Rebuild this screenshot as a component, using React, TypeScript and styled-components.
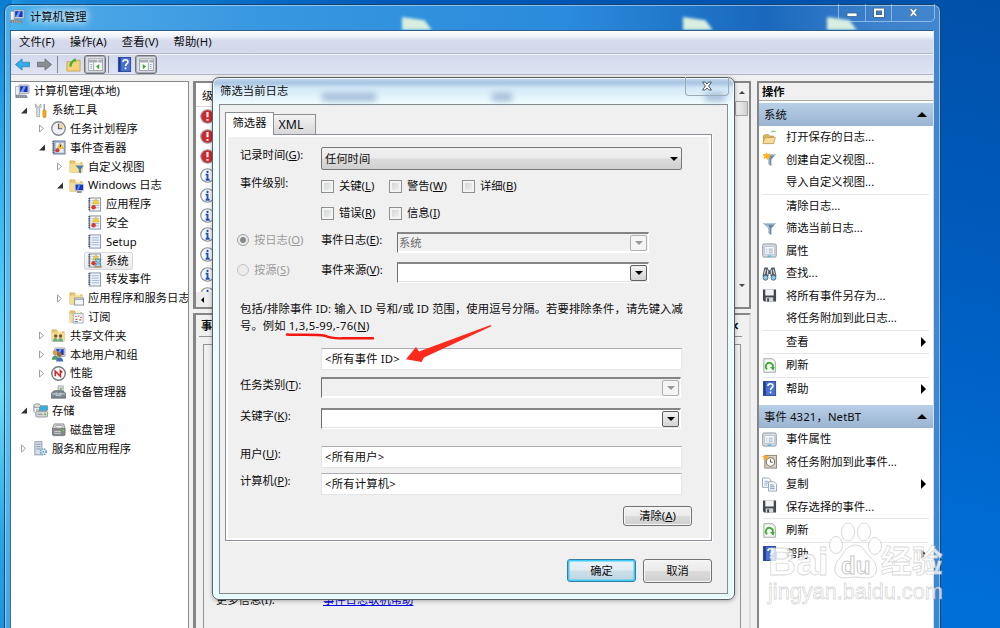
import { ReactNode } from "react";
import styled, { createGlobalStyle, css } from "styled-components";

const GlobalStyle = createGlobalStyle`
  * {
    box-sizing: border-box;
  }
  body {
    margin: 0;
    overflow: hidden;
    font-family: "Noto Sans", "Noto Sans CJK SC", sans-serif;
    font-size: 11.3px;
    line-height: 16px;
    color: #0c0c0c;
  }
  u {
    text-underline-offset: 1px;
  }
`;

/* ---------- icons ---------- */

const book = (
  <>
    <rect x="2.5" y="1" width="12" height="14" fill="#eef3fa" stroke="#7f8ea8" />
    <path d="M5 4h8M5 6.5h8M5 9h8M5 11.5h8" stroke="#9db4d4" />
    <path d="M2.5 1v14" stroke="#4e5a70" strokeWidth="2" strokeDasharray="1.4 .9" />
  </>
);
const alerts = (
  <>
    <path d="M9.500 1.500l3.400 6H6z" fill="#f8cf29" stroke="#e0ac16" strokeWidth=".5" />
    <circle cx="7" cy="11" r="2.400" fill="#d83a2e" />
  </>
);
const folder = (
  <>
    <path d="M1 2h5l1.5 2H14v10H1z" fill="#e9c56c" stroke="#c8a24c" strokeWidth=".7" />
    <path d="M7 1.500h5V5H7z" fill="#fbf6df" />
    <path d="M1 5h13v9H1z" fill="#f4dc92" />
  </>
);
const monitor = (
  <>
    <rect x="4" y="1" width="11" height="9" rx="1" fill="#d5d9df" stroke="#808894" strokeWidth=".7" />
    <rect x="5.500" y="2.300" width="8" height="6.200" fill="#1733c4" />
    <path d="M9 2.300h2.500L9 8.500H6z" fill="#6f9cf0" />
  </>
);
const funnel = (
  <>
    <path d="M1 2h14l-5 6v7l-3-2V8z" fill="#6b8ba5" />
    <path d="M1 2h14l-1 1.600H2.300z" fill="#b5c9d8" />
    <path d="M7.200 8l-3-3.500h2.500L8 8v5.500l-.8-.6z" fill="#b8d0de" />
  </>
);
const floppy = (
  <>
    <path d="M1 1.500h14v13H2.500L1 13z" fill="#44474d" />
    <rect x="3.500" y="1.500" width="9" height="6.500" fill="#f1f3f5" />
    <rect x="4" y="10" width="8" height="4.500" fill="#d3d6da" />
    <rect x="5.500" y="11" width="2" height="3.500" fill="#44474d" />
  </>
);
const properties = (
  <>
    <rect x=".7" y="1" width="14.500" height="14" rx="1.500" fill="#d9dee3" stroke="#8e979f" />
    <rect x="3" y="4" width="10" height="8.500" fill="#fff" stroke="#a6b2bd" strokeWidth=".7" />
    <path d="M4.500 6.500h1.300M4.500 8.500h1.300M4.500 10.500h1.300M7 6.500h4.500M7 8.500h4.500M7 10.500h4.500" stroke="#8fa6bd" />
    <path d="M6 14h4" stroke="#3bb5e6" strokeWidth="1.400" />
  </>
);
const help = (
  <>
    <rect x="1.500" y=".5" width="13" height="15" fill="#4a70d2" stroke="#2c4a9b" />
    <path d="M3 1v14" stroke="#1f3a8d" strokeWidth="2" />
    <path d="M6.300 5.400c.2-3.400 5.600-3 5.400 0-.1 1.900-2.500 2-2.600 4.300M9.100 11.300v1.800" fill="none" stroke="#fff" strokeWidth="1.700" />
  </>
);
const disks = (
  <>
    <rect x="1.500" y="6" width="13.500" height="8.500" rx="1.500" fill="#85898b" stroke="#555b5e" strokeWidth=".7" />
    <path d="M1.500 7l2-5h10L15 7z" fill="#d2d5d6" stroke="#666" strokeWidth=".7" />
    <ellipse cx="8.500" cy="5" rx="4" ry="1.600" fill="#eee" stroke="#777" strokeWidth=".6" />
    <path d="M3.500 10h7M3.500 12h7" stroke="#e8e8e8" strokeWidth=".8" />
    <circle cx="13" cy="9" r="1" fill="#66d22c" />
  </>
);

const drawings: Record<string, ReactNode> = {
  computer: (
    <>
      {monitor}
      <path d="M.5 2.500h4V13h-4z" fill="#eef0f2" stroke="#8b929b" strokeWidth=".7" />
      <path d="M1 11.500h11l1.500 3.500H.5z" fill="#777f87" />
      <path d="M2 12.700h10M2 14h10" stroke="#cdd2d6" strokeWidth=".7" strokeDasharray="1.500 .8" />
    </>
  ),
  tools: (
    <>
      <path d="M2.500 1v3.500L4 6v8.500h3V6l1.500-1.500V1L6.800 2.500v2H4.200v-2z" fill="#dde1e4" stroke="#8b9196" strokeWidth=".7" />
      <path d="M12 1v7" stroke="#9aa1a7" strokeWidth="1.600" />
      <rect x="10.500" y="7.500" width="3.400" height="8" rx="1.200" fill="#f0a81e" stroke="#bb7a0e" strokeWidth=".5" />
    </>
  ),
  clock: (
    <>
      <circle cx="8" cy="8" r="7.200" fill="#eef1f5" stroke="#85898e" strokeWidth="1.400" />
      <path d="M8 8V2.500A5.500 5.500 0 0 1 13.500 8z" fill="#f3d694" />
      <path d="M8 3v5.300h4" fill="none" stroke="#53606e" strokeWidth="1.200" />
    </>
  ),
  viewer: (
    <>
      <rect x="2.500" y="1" width="12.500" height="14" fill="#9fb0cb" stroke="#7384a3" />
      <rect x="5" y="3" width="8.500" height="10.500" fill="#e7edf6" />
      <path d="M10 3l3.500 6h-7z" fill="#f8cf29" stroke="#c99a16" strokeWidth=".5" />
      <path d="M10 5v2.500" stroke="#222" />
      <circle cx="6.800" cy="11" r="2.300" fill="#d83a2e" />
      <path d="M2.500 1v14" stroke="#56668a" strokeWidth="2" strokeDasharray="1.400 .9" />
    </>
  ),
  folderFilter: (
    <>
      {folder}
      <path d="M7 7h9l-3.300 4v4.500L10.500 14v-3z" fill="#4f7ea5" />
    </>
  ),
  folderMonitor: (
    <>
      {folder}
      <rect x="6.500" y="6.500" width="9" height="7" fill="#1a35c0" stroke="#c9d1de" />
      <path d="M10 7h2.500l-2.500 6H8z" fill="#5b86e8" />
      <path d="M8.500 15h5" stroke="#68707c" strokeWidth="1.400" />
    </>
  ),
  folderWindow: (
    <>
      {folder}
      <rect x="6" y="7.500" width="9.500" height="7.500" fill="#f4f7fa" stroke="#8b939c" />
      <path d="M6.500 9h8.500" stroke="#9fb3c8" strokeWidth="1.400" />
    </>
  ),
  log: (
    <>
      {book}
      {alerts}
    </>
  ),
  logBusy: (
    <>
      {book}
      {alerts}
      <path d="M8.500 6.500h6.500L12.700 10.500l2.500 4H8.500l2.400-4z" fill="#9bd3ec" stroke="#4b8eab" />
      <path d="M8 15h7.500" stroke="#d99a56" strokeWidth="1.300" />
    </>
  ),
  page: book,
  subscriptions: (
    <>
      {folder}
      <rect x="4.500" y="5" width="10.500" height="10" fill="#f6f8fb" stroke="#9faebf" />
      <path d="M6.500 8h1.500M9.500 7.500h1.500M12 9h1.500M7 11h2M11 11.500h2" stroke="#d2544a" strokeWidth="1.300" />
      <path d="M6 13.500h3.500" stroke="#4b86c4" strokeWidth="1.200" />
    </>
  ),
  shared: (
    <>
      {folder}
      <circle cx="5" cy="8.500" r="1.800" fill="#6d5a32" />
      <circle cx="10.200" cy="8.500" r="1.800" fill="#6d5a32" />
      <path d="M2 14.500c0-5 5-5 5.400 0zM7.500 14.500c0-5 5-5 5.400 0z" fill="#5fae8d" />
    </>
  ),
  users: (
    <>
      {monitor}
      <circle cx="4.500" cy="6" r="2.700" fill="#caa05c" />
      <circle cx="9" cy="8" r="2.600" fill="#9c6c3a" />
      <path d="M.8 13.500C1 8 7.500 8 8 13.500z" fill="#4d9c63" />
      <path d="M5.500 15.500c.2-6 7.200-6 7.500 0z" fill="#4170b8" />
    </>
  ),
  performance: (
    <>
      <circle cx="8" cy="8" r="7.200" fill="#fff" stroke="#777d82" strokeWidth="1.500" />
      <path d="M4.500 11V5.500l5.500 5.500V5l2 2" fill="none" stroke="#d22a2a" strokeWidth="1.700" />
    </>
  ),
  devices: (
    <>
      <rect x="7.500" y="1" width="5.500" height="7" fill="#d7dbde" stroke="#8a9299" strokeWidth=".7" />
      <circle cx="10.500" cy="4" r="1.100" fill="#67b63b" />
      <path d="M.5 8.500L3.500 6H12l3.500 2.500V14H.5z" fill="#7b8891" stroke="#4e5a62" strokeWidth=".7" />
      <path d="M1 9.500h14M5.500 8v3h5V8" fill="none" stroke="#cfd6db" />
    </>
  ),
  storage: (
    <>
      <rect x="3" y="9" width="12.500" height="6" rx="1.200" fill="#d4d8da" stroke="#7f868a" strokeWidth=".8" />
      <rect x="7" y="3" width="8.500" height="5" fill="#2fb0dd" stroke="#5d8390" strokeWidth=".7" />
      <ellipse cx="4.500" cy="3" rx="3.600" ry="2.200" fill="#dadddf" stroke="#7c8286" strokeWidth=".8" />
      <path d="M1 3v6l2 2M3 7.500h4" fill="none" stroke="#7c8286" />
      <circle cx="13" cy="12" r="1" fill="#52c31e" />
      <path d="M5 12h5" stroke="#888" />
    </>
  ),
  disks,
  services: (
    <>
      <rect x="2" y=".8" width="7.500" height="14" fill="#d5dfe8" stroke="#76879a" strokeWidth=".8" />
      <path d="M3.500 3.500H8M3.500 6H8M3.500 8.500H8" stroke="#7f94ac" />
      <circle cx="11" cy="11.500" r="3" fill="#eaf3fa" stroke="#6a9cc2" strokeWidth="1.700" strokeDasharray="1.600 .8" />
      <circle cx="11" cy="11.500" r="1" fill="#6a9cc2" />
    </>
  ),
  back: <path d="M.5 8l7-6v3.600h8v4.800h-8V14z" fill="#31aee8" stroke="#2e7fae" strokeWidth=".8" />,
  forward: <path d="M15.500 8l-7-6v3.600h-8v4.800h8V14z" fill="#8b8f93" stroke="#62666a" strokeWidth=".8" />,
  up: (
    <>
      <path d="M1 5h5l1.500-1.500H15V15H1z" fill="#f3d37c" stroke="#c3983c" strokeWidth=".8" />
      <path d="M3.500 10c0-4 2-5.500 4-6H6l4-3 1.200 4.500-1.500-1C7.500 5.500 6 7 6 10.500z" fill="#46b02d" />
    </>
  ),
  paneLeft: (
    <>
      <rect x=".7" y="2" width="14.600" height="12.500" fill="#fafbfc" stroke="#9a9fa5" />
      <path d="M1 4.500h14" stroke="#a7adb4" strokeWidth="2.500" strokeDasharray="9 1" />
      <path d="M6 6v8" stroke="#9ba2aa" />
      <path d="M2.500 8h2M2.500 10h2M2.500 12h2" stroke="#8ba2bb" />
      <path d="M12 7.500v5.500L8.500 10.200z" fill="#3ba934" />
    </>
  ),
  paneRight: (
    <>
      <rect x=".7" y="2" width="14.600" height="12.500" fill="#fafbfc" stroke="#9a9fa5" />
      <path d="M1 4.500h14" stroke="#a7adb4" strokeWidth="2.500" strokeDasharray="9 1" />
      <path d="M10 6v8" stroke="#9ba2aa" />
      <path d="M11.500 8h2M11.500 10h2M11.500 12h2" stroke="#8ba2bb" />
      <path d="M4 7.500v5.500l3.500-2.800z" fill="#3ba934" />
    </>
  ),
  help,
  open: (
    <>
      <path d="M1.500 6L3 5h4l1 1.500h4.500V14h-11z" fill="#dcb75f" stroke="#ae8839" strokeWidth=".7" />
      <path d="M.8 14.500l2.500-6.500h11L12.500 14.500z" fill="#f4dc96" stroke="#bb964a" strokeWidth=".7" />
      <path d="M10 2.500c1.500-2 3-1.500 4.500-.5" fill="none" stroke="#74cf69" strokeWidth="1.200" />
    </>
  ),
  funnel,
  newFilter: (
    <>
      {funnel}
      <path d="M5 0l1 2.300 2.700-.8-.9 2.700L9.500 6l-2.800.2L5.500 8.800 4.200 6.500l-3 .6 1.300-2.600L.8 2l2.900.4z" fill="#ffb323" />
    </>
  ),
  properties,
  find: (
    <>
      <path d="M2.500 1.500h3.500l1.300 3h1.400l1.300-3h3.500l2 9.500H9V8.500H7V11H.5z" fill="#555b62" />
      <path d="M4 3.500L2.500 9M12 3.500l1.500 5.500M6 4v5M10 4v5" stroke="#d7dce0" strokeWidth="1.200" />
      <circle cx="3.800" cy="12.500" r="2.600" fill="#8bcdec" stroke="#4a6675" />
      <circle cx="12.200" cy="12.500" r="2.600" fill="#8bcdec" stroke="#4a6675" />
    </>
  ),
  floppy,
  refresh: (
    <>
      <path d="M2 .8h9.500L14.200 4v11.200H2z" fill="#f8faf8" stroke="#9aa29a" />
      <path d="M5.500 12A3.800 3.800 0 1 1 11.500 10" fill="none" stroke="#3fae38" strokeWidth="1.900" />
      <path d="M8.500 9.500h5l-1.500 4z" fill="#3fae38" />
    </>
  ),
  task: (
    <>
      <rect x="3" y="1.500" width="12.500" height="13.500" fill="#d8d2c9" stroke="#8e8478" />
      <circle cx="9" cy="8.500" r="4.500" fill="#fff" stroke="#807668" strokeWidth="1.200" />
      <path d="M9 5.700v3h2.500" fill="none" stroke="#554e45" />
      <path d="M3.500 0l1 2.300L7 2 5.300 4l1 2.200-2.600-1L1.500 7 2 4.300 0 2.500l2.600-.2z" fill="#ffa61f" />
    </>
  ),
  copy: (
    <>
      <path d="M.5 1h6.500l2 2v8H.5z" fill="#fff" stroke="#8598b0" strokeWidth=".9" />
      <path d="M2.500 4.500h4M2.500 6.500h4M2.500 8.500h3" stroke="#7ea3d4" />
      <path d="M7 5h5.500l3 2.500V15H7z" fill="#fff" stroke="#8598b0" strokeWidth=".9" />
      <path d="M8.500 8.500h4M8.500 10.500h5M8.500 12.500h5" stroke="#5e8ccc" />
    </>
  ),
  error: (
    <>
      <circle cx="8" cy="8" r="7.200" fill="#cc2a30" stroke="#9da2a8" strokeWidth="1.200" />
      <path d="M8 3.200v5.600M8 10.600v2" stroke="#fff" strokeWidth="2.200" />
    </>
  ),
  info: (
    <>
      <circle cx="8" cy="8" r="7.200" fill="#f7f8fa" stroke="#8e9297" strokeWidth="1.300" />
      <path d="M8 3v2.300M6 7h2v5.500M6 12.500h4.300" fill="none" stroke="#1f4fb8" strokeWidth="2" />
    </>
  ),
};

const Glyph = styled.svg<{ $size?: number }>`
  display: block;
  flex: none;
  width: ${({ $size = 15 }) => $size}px;
  height: ${({ $size = 15 }) => $size}px;
`;

const Icon = ({ name, size }: { name: string; size?: number }) => (
  <Glyph viewBox="0 0 16 16" $size={size}>
    {drawings[name]}
  </Glyph>
);

const Triangle = styled.span<{ $dir: "up" | "down" | "left" | "right"; $color?: string; $size?: number }>`
  flex: none;
  border: ${({ $size = 4 }) => $size}px solid transparent;
  ${({ $dir, $color = "#000", $size = 4 }) => {
    const side = { up: "bottom", down: "top", left: "right", right: "left" }[$dir];
    const opposite = { up: "top", down: "bottom", left: "left", right: "right" }[$dir];
    return css`
      border-${side}: ${$size}px solid ${$color};
      border-${opposite}: 0;
    `;
  }}
`;

/* ---------- desktop and main window ---------- */

const Desktop = styled.div`
  position: relative;
  width: 1000px;
  height: 628px;
  overflow: hidden;
  background: linear-gradient(90deg, #28b0ec 0, #1787d8 25px, transparent 400px),
    linear-gradient(195deg, #0050a8 0%, #005cbe 30%, #006cd4 60%, #007ae6 100%);
`;

const LeftGlow = styled.div`
  position: absolute;
  left: 0;
  top: 0;
  width: 12px;
  height: 628px;
  background: linear-gradient(#0b7cd2, #1e9be4 15%, #43c2f5 40%, #6ddcf8 62%, #2aa6e4 85%, #1c93dc);
`;

const Window = styled.div`
  position: absolute;
  left: 4px;
  top: 4px;
  width: 937px;
  height: 640px;
  padding: 0 6px 0 5px;
  border: 1px solid #16456f;
  border-radius: 7px 7px 0 0;
  box-shadow: inset 0 0 0 1px rgba(190, 228, 255, 0.6);
  background: linear-gradient(rgba(255, 255, 255, 0) 70%, rgba(30, 140, 225, 0.3)),
    linear-gradient(
      90deg,
      rgba(90, 190, 240, 0.75) 0,
      #4aa5e6 90px,
      #3797e0 260px,
      #2b8bdc 560px,
      #1968bd 760px,
      #3d80cb 870px,
      #4286cf 100%
    );
`;

const TitleBar = styled.div`
  position: relative;
  display: flex;
  align-items: center;
  height: 25px;
  padding-bottom: 2px;
`;

const WindowTitle = styled.span`
  margin-left: 5px;
  text-shadow: 0 0 7px #d5efff, 0 0 7px #d5efff, 0 0 10px #d5efff;
`;

const Flare = styled.span<{ $x: number }>`
  position: absolute;
  left: ${({ $x }) => $x}px;
  bottom: 0;
  width: 38px;
  height: 16px;
  overflow: hidden;
  filter: blur(1.5px);
  &::before {
    content: "";
    display: block;
    height: 16px;
    margin: 3px 3px 0;
    background: #d8efdf;
    clip-path: polygon(0 0, 70% 20%, 100% 100%, 0 100%);
  }
`;

const Captions = styled.div`
  position: absolute;
  right: -1px;
  top: -1px;
  display: flex;
  height: 18px;
  border: 1px solid rgba(205, 230, 250, 0.55);
  border-top: 0;
  border-radius: 0 0 5px 5px;
`;

const Caption = styled.span<{ $w: number }>`
  display: flex;
  align-items: center;
  justify-content: center;
  width: ${({ $w }) => $w}px;
  & + & {
    border-left: 1px solid rgba(205, 230, 250, 0.5);
  }
`;

const Client = styled.div`
  position: relative;
  height: 600px;
  background: #f0f0f0;
  border: 1px solid #41688f;
  border-top-color: #2b5c8a;
  border-right-color: #d9e9f6;
`;

const MenuBar = styled.div`
  display: flex;
  align-items: center;
  gap: 15px;
  height: 23px;
  padding-left: 8px;
  border-bottom: 1px solid #b5b8c6;
  background: linear-gradient(#fff, #eef1f8 25%, #d6daec 45%, #d4d9ed);
  letter-spacing: 0.1px;
`;

const ToolBar = styled.div`
  display: flex;
  align-items: center;
  height: 21px;
  border-top: 1px solid #f3f5fb;
  border-bottom: 1px solid #b2b6c4;
  background: linear-gradient(#d3d8ec, #dfe4f4);
`;

const Tool = styled.span<{ $pressed?: boolean }>`
  display: flex;
  align-items: center;
  justify-content: center;
  width: 22px;
  height: 19px;
  ${({ $pressed }) =>
    $pressed &&
    css`
      border: 1px solid #6f7278;
      border-radius: 3px;
      background: #dcdee4;
      box-shadow: inset 0 0 0 1px #a9acb3;
    `}
`;

const ToolSeparator = styled.span`
  width: 1px;
  height: 17px;
  margin: 0 4px 0 2px;
  background: #858993;
`;

const Panes = styled.div`
  display: grid;
  grid-template-columns: 178px 558px 179px;
  column-gap: 4px;
  height: 560px;
  padding-top: 6px;
`;

/* ---------- navigation tree ---------- */

const Tree = styled.div`
  min-width: 0;
  overflow: hidden;
  background: #fff;
  border: 1px solid #85898e;
  border-left: 0;
`;

const TreeRow = styled.div<{ $level: number }>`
  display: flex;
  align-items: center;
  height: 18.8px;
  margin-left: ${({ $level }) => $level * 18 - 14}px;
  white-space: nowrap;
`;

const Twisty = styled.svg`
  flex: none;
  width: 8px;
  height: 9px;
  margin: 0 5px;
`;

const NodeLabel = styled.span<{ $selected?: boolean }>`
  display: flex;
  align-items: center;
  gap: 4px;
  height: 18px;
  ${({ $selected }) =>
    $selected &&
    css`
      margin-left: -3px;
      padding: 0 3px 0 2px;
      border: 1px solid #d9d9d9;
      border-radius: 2px;
      background: linear-gradient(#f9f9f9, #e9e9e9);
    `}
`;

interface TreeNode {
  level: number;
  icon: string;
  label: string;
  open?: boolean;
  selected?: boolean;
}

const nodes: TreeNode[] = [
  { level: 0, icon: "computer", label: "计算机管理(本地)" },
  { level: 1, icon: "tools", label: "系统工具", open: true },
  { level: 2, icon: "clock", label: "任务计划程序", open: false },
  { level: 2, icon: "viewer", label: "事件查看器", open: true },
  { level: 3, icon: "folderFilter", label: "自定义视图", open: false },
  { level: 3, icon: "folderMonitor", label: "Windows 日志", open: true },
  { level: 4, icon: "log", label: "应用程序" },
  { level: 4, icon: "log", label: "安全" },
  { level: 4, icon: "page", label: "Setup" },
  { level: 4, icon: "logBusy", label: "系统", selected: true },
  { level: 4, icon: "page", label: "转发事件" },
  { level: 3, icon: "folderWindow", label: "应用程序和服务日志", open: false },
  { level: 3, icon: "subscriptions", label: "订阅" },
  { level: 2, icon: "shared", label: "共享文件夹", open: false },
  { level: 2, icon: "users", label: "本地用户和组", open: false },
  { level: 2, icon: "performance", label: "性能", open: false },
  { level: 2, icon: "devices", label: "设备管理器" },
  { level: 1, icon: "storage", label: "存储", open: true },
  { level: 2, icon: "disks", label: "磁盘管理" },
  { level: 1, icon: "services", label: "服务和应用程序", open: false },
];

/* ---------- event list and preview ---------- */

const Middle = styled.div`
  display: flex;
  flex-direction: column;
  gap: 4px;
`;

const EventPane = styled.div`
  display: flex;
  height: 228px;
  border: 2px solid #858585;
  border-left-width: 3px;
  background: #fff;
`;

const EventList = styled.div`
  flex: 1;
  display: flex;
  flex-direction: column;
  overflow: hidden;
`;

const ColumnHead = styled.div`
  flex: none;
  height: 24px;
  padding: 5px 0 0 6px;
  border-bottom: 1px solid #d8dade;
`;

const EventRow = styled.div`
  flex: none;
  display: flex;
  align-items: center;
  height: 19.7px;
  padding-left: 4px;
`;

const Rows = styled.div`
  flex: 1;
  overflow: hidden;
`;

const HorizontalBar = styled.div`
  flex: none;
  display: flex;
  align-items: center;
  height: 15px;
  padding-left: 5px;
  background: #ececec;
`;

const VerticalBar = styled.div`
  display: flex;
  flex-direction: column;
  align-items: center;
  width: 15px;
  padding: 8px 0 20px;
  background: #f0f0f0;
`;

const Thumb = styled.span`
  width: 13px;
  height: 15px;
  margin: 7px 0 auto;
  border: 1px solid #a3a3a3;
  border-radius: 1px;
  background: linear-gradient(90deg, #f5f5f5, #cfcfcf);
`;

const Preview = styled.div`
  flex: 1;
  display: flex;
  flex-direction: column;
  padding: 0 7px 0 3px;
  border-top: 2px solid #858585;
  border-left: 3px solid #858585;
  border-right: 2px solid #dedede;
`;

const PreviewHead = styled.div`
  display: flex;
  justify-content: space-between;
  align-items: center;
  height: 22px;
  padding: 0 3px 0 2px;
  border-bottom: 1px solid #929292;
  font-weight: 600;
`;

const PreviewBody = styled.div`
  flex: 1;
  display: flex;
  align-items: flex-start;
  margin: 7px 1px 0 4px;
  padding: 247px 0 0 12px;
  border: 1px solid #8f9398;
  border-bottom: 0;
`;

const MoreInfo = styled.span`
  width: 107px;
`;

const HelpLink = styled.a`
  color: #0000e0;
  text-decoration: underline;
`;

/* ---------- actions pane ---------- */

const Actions = styled.div`
  margin-left: 2px;
  border: 2px solid #858585;
  border-right: 1px solid #dcdcdc;
  border-bottom: 0;
  background: #fff;
`;

const ActionsTitle = styled.div`
  height: 18px;
  padding: 1px 0 0 3px;
  background: #f0f0f0;
  border-bottom: 1px solid #a9a9a9;
  font-weight: 600;
`;

const GroupHead = styled.div<{ $gap: number }>`
  display: flex;
  align-items: center;
  justify-content: space-between;
  height: 23px;
  margin-top: ${({ $gap }) => $gap}px;
  padding: 0 6px 0 5px;
  background: linear-gradient(#b9cfe7, #9ab4d1);
  letter-spacing: 0.15px;
`;

const ActionRow = styled.div`
  display: flex;
  align-items: center;
  height: 22.5px;
  padding: 0 7px 0 3px;
`;

const IconSlot = styled.span`
  width: 24px;
`;

const ActionLabel = styled.span`
  flex: 1;
`;

const Divider = styled.div`
  height: 1px;
  margin: 0 4px;
  background: #e6e6e6;
`;

interface Action {
  label?: string;
  icon?: string;
  more?: boolean;
}

const logActions: Action[] = [
  { label: "打开保存的日志...", icon: "open" },
  { label: "创建自定义视图...", icon: "newFilter" },
  { label: "导入自定义视图..." },
  {},
  { label: "清除日志..." },
  { label: "筛选当前日志...", icon: "funnel" },
  { label: "属性", icon: "properties" },
  { label: "查找...", icon: "find" },
  { label: "将所有事件另存为...", icon: "floppy" },
  { label: "将任务附加到此日志..." },
  {},
  { label: "查看", more: true },
  {},
  { label: "刷新", icon: "refresh" },
  {},
  { label: "帮助", icon: "help", more: true },
];

const eventActions: Action[] = [
  { label: "事件属性", icon: "properties" },
  { label: "将任务附加到此事件...", icon: "task" },
  { label: "复制", icon: "copy", more: true },
  { label: "保存选择的事件...", icon: "floppy" },
  {},
  { label: "刷新", icon: "refresh" },
  {},
  { label: "帮助", icon: "help", more: true },
];

const ActionGroup = ({ title, items, gap }: { title: string; items: Action[]; gap: number }) => (
  <>
    <GroupHead $gap={gap}>
      {title}
      <Triangle $dir="up" $size={5} />
    </GroupHead>
    {items.map((item, i) =>
      item.label ? (
        <ActionRow key={i}>
          <IconSlot>{item.icon && <Icon name={item.icon} />}</IconSlot>
          <ActionLabel>{item.label}</ActionLabel>
          {item.more && <Triangle $dir="right" $size={5} />}
        </ActionRow>
      ) : (
        <Divider key={i} />
      )
    )}
  </>
);

/* ---------- filter dialog ---------- */

const Dialog = styled.div`
  position: absolute;
  left: 212px;
  top: 77px;
  width: 523px;
  height: 523px;
  padding: 0 6px 6px;
  border: 1px solid #586068;
  border-radius: 7px;
  background: linear-gradient(#c4daf0 0, #a9c5e2 5px, #d3e8f8 10px, #effdfd 26px, #e6fafb);
  box-shadow: inset 0 0 0 1px rgba(255, 255, 255, 0.8), 0 1px 4px rgba(0, 0, 0, 0.3);
`;

const DialogTitle = styled.div`
  position: relative;
  height: 26px;
  padding: 5px 0 0 1px;
  letter-spacing: 0.1px;
`;

const Ghost = styled.span<{ $x: number; $w: number }>`
  position: absolute;
  left: ${({ $x }) => $x}px;
  top: 15px;
  width: ${({ $w }) => $w}px;
  height: 8px;
  background: #7f9cc4;
  opacity: 0.65;
  filter: blur(3px);
`;

const DialogClose = styled.span`
  position: absolute;
  right: -1px;
  top: -1px;
  display: flex;
  align-items: center;
  justify-content: center;
  width: 44px;
  height: 19px;
  border: 1px solid #9eabb3;
  border-top: 0;
  border-radius: 0 0 4px 4px;
`;

const DialogBody = styled.div`
  height: 490px;
  padding: 7px 15px 0 5px;
  border: 1px solid #858c90;
  background: #f0f0f0;
`;

const Tabs = styled.div`
  display: flex;
  align-items: flex-end;
  height: 22px;
`;

const Tab = styled.span<{ $active?: boolean }>`
  display: flex;
  align-items: center;
  justify-content: center;
  width: 42px;
  height: 20px;
  padding-right: 7px;
  border: 1px solid #8b8f94;
  border-bottom: 0;
  border-left: 0;
  background: linear-gradient(#f3f3f3, #d8d8d8);
  font-size: 12.3px;
  ${({ $active }) =>
    $active &&
    css`
      width: 49px;
      height: 23px;
      margin-bottom: -1px;
      padding: 0 0 3px;
      border-left: 1px solid #8b8f94;
      background: #fff;
      font-size: 11.3px;
      z-index: 1;
    `}
`;

const TabPage = styled.div`
  height: 407px;
  padding: 10px 29px 0 11px;
  border: 1px solid #8b8f98;
  background: #f0f0f0;
  box-shadow: inset 0 0 0 2px #fff, 1px 1px 0 #fff;
`;

const Row = styled.div<{ $h: number; $gap?: number }>`
  display: flex;
  align-items: flex-start;
  height: ${({ $h }) => $h}px;
  margin-top: ${({ $gap = 0 }) => $gap}px;
  padding-left: 3px;
`;

const Label = styled.span<{ $w?: number; $shift?: number }>`
  flex: none;
  width: ${({ $w = 81 }) => $w}px;
  margin-top: ${({ $shift = 0 }) => $shift}px;
  white-space: nowrap;
`;

const DropList = styled.div`
  flex: 1;
  display: flex;
  align-items: center;
  justify-content: space-between;
  height: 23px;
  padding: 0 3px;
  border: 1px solid #777;
  border-radius: 2px;
  background: linear-gradient(#f2f2f2, #ebebeb 48%, #dcdcdc 52%, #cfcfcf);
`;

const Combo = styled.div<{ $w: number; $disabled?: boolean }>`
  display: flex;
  align-items: center;
  justify-content: space-between;
  width: ${({ $w }) => $w}px;
  height: 21px;
  padding: 0 1px 1px 1px;
  border: 1px solid #fff;
  border-top: 2px solid #858585;
  border-left: 1px solid #6f6f6f;
  color: #6d6d6d;
  background: ${({ $disabled }) => ($disabled ? "#f0f0f0" : "#fff")};
  box-shadow: inset 0 -1px 0 ${({ $disabled }) => ($disabled ? "#fff" : "#e3e3e3")};
`;

const ComboButton = styled.span<{ $disabled?: boolean }>`
  display: flex;
  align-items: center;
  justify-content: center;
  width: 17px;
  height: 16px;
  margin-left: auto;
  border: 1px solid ${({ $disabled }) => ($disabled ? "#adb2b5" : "#5e5e5e")};
  border-radius: 2px;
  background: ${({ $disabled }) => ($disabled ? "#f4f4f4" : "linear-gradient(#f2f2f2, #d4d4d4)")};
`;

const CheckItem = styled.label<{ $w: number }>`
  display: flex;
  align-items: center;
  gap: 5px;
  width: ${({ $w }) => $w}px;
  white-space: nowrap;
`;

const CheckBox = styled.span`
  width: 13px;
  height: 13px;
  border: 1px solid #8e8f8f;
  background: linear-gradient(135deg, #cdd0d4, #f6f6f6);
  box-shadow: inset 0 0 0 2px #f4f4f4;
`;

const RadioItem = styled.label`
  display: flex;
  align-items: center;
  gap: 5px;
  width: 84px;
  margin-left: -3px;
  color: #9b9b9b;
`;

const RadioDot = styled.span<{ $on?: boolean }>`
  width: 12px;
  height: 12px;
  border: 1px solid ${({ $on }) => ($on ? "#a2a2a2" : "#c4c4c4")};
  border-radius: 50%;
  background: ${({ $on }) => ($on ? "radial-gradient(#8a8a8a 0 2.5px, #e9e9e9 3.5px)" : "#ececec")};
`;

const Hint = styled.p`
  margin: 18px 0 0 3px;
  line-height: 16.5px;
  letter-spacing: 0.1px;
  white-space: nowrap;
`;

const Sample = styled.span`
  letter-spacing: 0.27px;
`;

const TextBox = styled.div`
  width: 361px;
  height: 22px;
  padding: 2px 3px;
  border: 1px solid #e2e5ea;
  border-top-color: #abadb3;
  background: #fff;
  letter-spacing: 0.2px;
`;

const Button = styled.button<{ $default?: boolean }>`
  width: 69px;
  height: 24px;
  padding: 0;
  border: 1px solid #737373;
  border-radius: 3px;
  font: inherit;
  color: inherit;
  background: linear-gradient(#f3f3f3, #ebebeb 48%, #dcdcdc 52%, #cecece);
  box-shadow: inset 0 0 0 1px #f6f6f6;
  ${({ $default }) =>
    $default &&
    css`
      height: 23px;
      border-color: #347ea6;
      background: linear-gradient(#ecf3f7, #dfecf3 48%, #cddfe9 52%, #bed5e2);
      box-shadow: inset 0 0 0 1.5px #3fcbf5;
    `}
`;

const PageFoot = styled.div`
  display: flex;
  justify-content: flex-end;
  margin: 11px -10px 0 0;
  ${Button} {
    height: 20px;
  }
`;

const DialogFoot = styled.div`
  display: flex;
  justify-content: flex-end;
  gap: 7px;
  padding: 18px 0 0;
`;

const FilterDialog = () => (
  <Dialog>
    <DialogTitle>
      筛选当前日志
      <Ghost $x={103} $w={54} />
      <Ghost $x={273} $w={20} />
      <Ghost $x={486} $w={20} />
      <DialogClose>
        <Glyph viewBox="0 0 12 10" $size={12}>
          <path d="M1.500 1h2.700L6 3l1.800-2h2.700L7.600 5l2.900 4H7.800L6 7 4.200 9H1.500l2.900-4z" fill="#fff" stroke="#50565e" />
        </Glyph>
      </DialogClose>
    </DialogTitle>
    <DialogBody>
      <Tabs>
        <Tab $active>筛选器</Tab>
        <Tab>XML</Tab>
      </Tabs>
      <TabPage>
        <Row $h={23} $gap={2}>
          <Label>
            记录时间(<u>G</u>):
          </Label>
          <DropList>
            任何时间
            <Triangle $dir="down" />
          </DropList>
        </Row>
        <Row $h={16} $gap={8}>
          <Label $shift={-3}>事件级别:</Label>
          <CheckItem $w={68}>
            <CheckBox />
            <span>
              关键(<u>L</u>)
            </span>
          </CheckItem>
          <CheckItem $w={73}>
            <CheckBox />
            <span>
              警告(<u>W</u>)
            </span>
          </CheckItem>
          <CheckItem $w={73}>
            <CheckBox />
            <span>
              详细(<u>B</u>)
            </span>
          </CheckItem>
        </Row>
        <Row $h={16} $gap={11}>
          <Label />
          <CheckItem $w={68}>
            <CheckBox />
            <span>
              错误(<u>R</u>)
            </span>
          </CheckItem>
          <CheckItem $w={73}>
            <CheckBox />
            <span>
              信息(<u>I</u>)
            </span>
          </CheckItem>
        </Row>
        <Row $h={21} $gap={11}>
          <RadioItem>
            <RadioDot $on />
            <span>
              按日志(<u>O</u>)
            </span>
          </RadioItem>
          <Label $w={76}>
            事件日志(<u>E</u>):
          </Label>
          <Combo $w={252} $disabled>
            系统
            <ComboButton $disabled>
              <Triangle $dir="down" $color="#999" />
            </ComboButton>
          </Combo>
        </Row>
        <Row $h={21} $gap={9}>
          <RadioItem>
            <RadioDot />
            <span>
              按源(<u>S</u>)
            </span>
          </RadioItem>
          <Label $w={76}>
            事件来源(<u>V</u>):
          </Label>
          <Combo $w={252}>
            <ComboButton>
              <Triangle $dir="down" />
            </ComboButton>
          </Combo>
        </Row>
        <Hint>
          包括/排除事件 ID: 输入 ID 号和/或 ID 范围，使用逗号分隔。若要排除条件，请先键入减
          <br />
          号。例如{" "}
          <Sample>
            1,3,5-99,-76(<u>N</u>)
          </Sample>
        </Hint>
        <Row $h={22} $gap={14}>
          <Label />
          <TextBox>&lt;所有事件 ID&gt;</TextBox>
        </Row>
        <Row $h={21} $gap={7}>
          <Label>
            任务类别(<u>T</u>):
          </Label>
          <Combo $w={360} $disabled>
            <ComboButton $disabled>
              <Triangle $dir="down" $color="#999" />
            </ComboButton>
          </Combo>
        </Row>
        <Row $h={21} $gap={10}>
          <Label>
            关键字(<u>K</u>):
          </Label>
          <Combo $w={360}>
            <ComboButton>
              <Triangle $dir="down" />
            </ComboButton>
          </Combo>
        </Row>
        <Row $h={22} $gap={17}>
          <Label>
            用户(<u>U</u>):
          </Label>
          <TextBox>&lt;所有用户&gt;</TextBox>
        </Row>
        <Row $h={22} $gap={5}>
          <Label>
            计算机(<u>P</u>):
          </Label>
          <TextBox>&lt;所有计算机&gt;</TextBox>
        </Row>
        <PageFoot>
          <Button>
            清除(<u>A</u>)
          </Button>
        </PageFoot>
      </TabPage>
      <DialogFoot>
        <Button $default>确定</Button>
        <Button>取消</Button>
      </DialogFoot>
    </DialogBody>
  </Dialog>
);

/* ---------- overlays ---------- */

const Markup = styled.svg`
  position: absolute;
  left: 280px;
  top: 315px;
  width: 220px;
  height: 60px;
`;

const Watermark = styled.div`
  position: absolute;
  left: 768px;
  top: 520px;
  width: 182px;
  height: 90px;
  color: rgba(255, 255, 255, 0.8);
  font-family: "Liberation Sans", "Noto Sans CJK SC", sans-serif;
  -webkit-text-stroke: 0.8px rgba(175, 175, 175, 0.5);
`;

const Brand = styled.div`
  display: flex;
  align-items: flex-end;
  height: 61px;
  font-size: 39px;
  font-weight: 700;
  line-height: 38px;
`;

const Paw = styled.svg`
  width: 54px;
  height: 58px;
  margin: 0 0 2px -1px;
  text {
    font-size: 24px;
    stroke: rgba(160, 160, 160, 0.6);
  }
`;

const BrandCjk = styled.span`
  margin-left: -1px;
  font-size: 31px;
  line-height: 38px;
`;

const Site = styled.div`
  font-size: 21.7px;
  line-height: 22px;
  white-space: nowrap;
`;

export default function App() {
  return (
    <Desktop>
      <GlobalStyle />
      <LeftGlow />
      <Window>
        <TitleBar>
          <Icon name="computer" />
          <WindowTitle>计算机管理</WindowTitle>
          <Flare $x={389} />
          <Flare $x={670} />
          <Flare $x={814} />
          <Captions>
            <Caption $w={26}>
              <Glyph viewBox="0 0 12 12" $size={12}>
                <rect x="1" y="6" width="10" height="3.500" fill="#fff" stroke="#47617f" strokeWidth=".8" />
              </Glyph>
            </Caption>
            <Caption $w={26}>
              <Glyph viewBox="0 0 12 12" $size={12}>
                <rect x="2" y="2.500" width="8" height="6.500" fill="none" stroke="#47617f" strokeWidth="3.500" />
                <rect x="2" y="2.500" width="8" height="6.500" fill="none" stroke="#fff" strokeWidth="2" />
              </Glyph>
            </Caption>
            <Caption $w={43}>
              <Glyph viewBox="0 0 12 10" $size={11}>
                <path d="M1.500 1h2.700L6 3l1.800-2h2.700L7.600 5l2.900 4H7.800L6 7 4.200 9H1.500l2.900-4z" fill="#fff" stroke="#47617f" strokeWidth=".7" />
              </Glyph>
            </Caption>
          </Captions>
        </TitleBar>
        <Client>
          <MenuBar>
            <span>文件(F)</span>
            <span>操作(A)</span>
            <span>查看(V)</span>
            <span>帮助(H)</span>
          </MenuBar>
          <ToolBar>
            <Tool>
              <Icon name="back" />
            </Tool>
            <Tool>
              <Icon name="forward" />
            </Tool>
            <ToolSeparator />
            <Tool>
              <Icon name="up" />
            </Tool>
            <Tool $pressed>
              <Icon name="paneLeft" />
            </Tool>
            <ToolSeparator />
            <Tool>
              <Icon name="help" />
            </Tool>
            <Tool $pressed>
              <Icon name="paneRight" />
            </Tool>
          </ToolBar>
          <Panes>
            <Tree>
              {nodes.map((node, i) => (
                <TreeRow key={i} $level={node.level}>
                  <Twisty viewBox="0 0 8 9">
                    {node.open === true && <path d="M7 1.500v6H1z" fill="#333" />}
                    {node.open === false && <path d="M1.500 1v7L5.500 4.500z" fill="#fff" stroke="#a0a0a0" />}
                  </Twisty>
                  <NodeLabel $selected={node.selected}>
                    <Icon name={node.icon} />
                    {node.label}
                  </NodeLabel>
                </TreeRow>
              ))}
            </Tree>
            <Middle>
              <EventPane>
                <EventList>
                  <ColumnHead>级</ColumnHead>
                  <Rows>
                    {Array.from({ length: 10 }, (_, i) => (
                      <EventRow key={i}>
                        <Icon name={i < 3 ? "error" : "info"} />
                      </EventRow>
                    ))}
                  </Rows>
                  <HorizontalBar>
                    <Triangle $dir="left" $size={3} />
                  </HorizontalBar>
                </EventList>
                <VerticalBar>
                  <Triangle $dir="up" $size={3} $color="#444" />
                  <Thumb />
                  <Triangle $dir="down" $size={3} $color="#444" />
                </VerticalBar>
              </EventPane>
              <Preview>
                <PreviewHead>
                  <span>事</span>
                  <span>✕</span>
                </PreviewHead>
                <PreviewBody>
                  <MoreInfo>更多信息(I):</MoreInfo>
                  <HelpLink>事件日志联机帮助</HelpLink>
                </PreviewBody>
              </Preview>
            </Middle>
            <Actions>
              <ActionsTitle>操作</ActionsTitle>
              <ActionGroup title="系统" items={logActions} gap={2} />
              <ActionGroup title="事件 4321，NetBT" items={eventActions} gap={5} />
            </Actions>
          </Panes>
        </Client>
      </Window>
      <FilterDialog />
      <Markup viewBox="0 0 220 60">
        <path d="M7 19.500c14 .8 28-.4 38 1.200 5 2.300 10 3 18 2.600h30" fill="none" stroke="#f4150f" strokeWidth="2.400" strokeLinecap="round" />
        <path d="M210 10.300c1.500-.5 1.500.9.300 1.500L144 42.500l-2.500 4.500L126 44.300 136 32l3 4.500z" fill="#fb2a1c" />
      </Markup>
      <Watermark>
        <Brand>
          <span>Bai</span>
          <Paw viewBox="0 0 54 58">
            <g fill="rgba(255,255,255,.8)" stroke="rgba(175,175,175,.5)">
              <ellipse cx="8" cy="24" rx="6.500" ry="8.500" />
              <ellipse cx="20" cy="11" rx="6.500" ry="9" />
              <ellipse cx="36" cy="11" rx="6.500" ry="9" />
              <ellipse cx="47" cy="25" rx="6.500" ry="8.500" />
              <path d="M27 24c-8 0-10 7-15 13-7 7-8 19 4 20 5 0 7-1 11-1s7 1 12 1c12-1 12-13 4-20-6-6-8-13-16-13z" />
            </g>
            <text x="13" y="53" fill="#fff">
              du
            </text>
          </Paw>
          <BrandCjk>经验</BrandCjk>
        </Brand>
        <Site>jingyan.baidu.com</Site>
      </Watermark>
    </Desktop>
  );
}
